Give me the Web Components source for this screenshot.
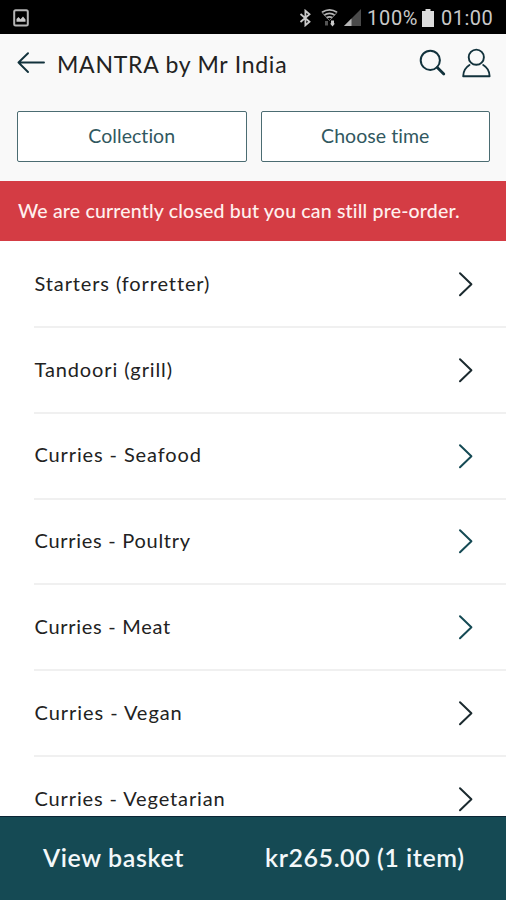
<!DOCTYPE html>
<html lang="en">
<head>
<meta charset="utf-8">
<meta name="viewport" content="width=device-width, initial-scale=1">
<title>MANTRA by Mr India</title>
<style>
  html, body { margin: 0; height: 100%; }
  body { font-family: Lato, "Open Sans", sans-serif; overflow: hidden; }
</style>
</head>
<body>
<menu-screen></menu-screen>

<template id="status-bar">
  <style>
    :host {
      display: flex;
      align-items: center;
      height: 34px;
      box-sizing: border-box;
      padding: 1px 12px 0 13px;
      background: #000;
      color: #c9c9c9;
      font: 20px/34px Roboto, sans-serif;
    }
    svg { display: block; flex: none; }
    .spacer { flex: 1; }
    .bluetooth { margin-right: 9px; }
    .wifi { margin-right: 5px; }
    .signal { margin-right: 5px; }
    .percent { width: 52px; letter-spacing: 0.7px; margin-right: 3px; white-space: nowrap; }
    .battery { margin-right: 7px; }
    .clock { width: 53px; letter-spacing: 0.5px; white-space: nowrap; }
  </style>
  <svg width="16" height="18" viewBox="0 0 16 18">
    <rect x="1.2" y="1.2" width="13.6" height="15.2" rx="1.5" fill="none" stroke="#b5b5b5" stroke-width="2"/>
    <path d="M3.5 12.7V10l2-2 2 2.2L10 7.5l2.5 3v2.2z" fill="#c9c9c9"/>
  </svg>
  <span class="spacer"></span>
  <svg class="bluetooth" width="13" height="18" viewBox="0 0 13 18">
    <path d="M1.5 5l9 7.8L6.4 16.3V1.7l4.1 3.5-9 7.8" fill="none" stroke="#c9c9c9" stroke-width="1.8"/>
  </svg>
  <svg class="wifi" width="17" height="19" viewBox="0 0 17 19">
    <g fill="none" stroke="#b5b5b5" stroke-width="1.7">
      <path d="M1 4.3q7.5-5 15 0"/>
      <path d="M3 7.2q5.5-3.8 11 0"/>
      <path d="M5.5 9.8q3-2 6 0"/>
    </g>
    <path d="M1 4.5l7.5 8 7.5-8" fill="none" stroke="#777"/>
    <path d="M4 13h3v4.5H4z" fill="#555"/>
    <path d="M10 12.500h3v3h1L11.500 18.500 9 15.500h1z" fill="#c9c9c9"/>
  </svg>
  <svg class="signal" width="19" height="19" viewBox="0 0 19 19">
    <path d="M18 1v17H1z" fill="#4a4a4a"/>
    <path d="M8.5 10.5V18H1z" fill="#b5b5b5"/>
  </svg>
  <span class="percent">100%</span>
  <svg class="battery" width="12" height="18" viewBox="0 0 12 18">
    <path d="M3.5 0h5v2H12v16H0V2h3.500z" fill="#dcdcdc"/>
  </svg>
  <span class="clock">01:00</span>
</template>

<template id="top-bar">
  <style>
    :host {
      display: flex;
      align-items: center;
      height: 60px;
      box-sizing: border-box;
      padding: 0 15px 2px 17px;
      color: #222;
    }
    svg { display: block; flex: none; fill: none; stroke: #12323c; stroke-linecap: round; stroke-linejoin: round; }
    h1 {
      flex: 1;
      margin: 1px 0 0 12px;
      font-size: 23px;
      font-weight: 400;
      line-height: 28px;
      letter-spacing: 0.75px;
      white-space: nowrap;
    }
    .search { margin-right: 16.5px; }
  </style>
  <svg width="28" height="22" viewBox="0 0 28 22" stroke-width="1.9">
    <path d="M27 10.5H1.5M11 1.2L1.5 10.5l9.5 9.5"/>
  </svg>
  <h1><slot></slot></h1>
  <svg class="search" width="27" height="28" viewBox="0 0 27 28">
    <circle cx="11.3" cy="11.3" r="9.6" stroke-width="2"/>
    <path d="M18.3 18.5l6.500 6.500" stroke-width="2.8"/>
  </svg>
  <svg width="29" height="30" viewBox="0 0 29 30" stroke-width="1.9">
    <circle cx="14.3" cy="9.2" r="7.6"/>
    <path d="M7.5 17C3.8 19.2 1.3 23.5 1.2 28.2h26.4C27.5 23.5 25 19.2 21.2 17"/>
  </svg>
</template>

<template id="option-button">
  <style>
    :host { display: block; flex: 1; }
    button {
      display: block;
      width: 100%;
      height: 51px;
      padding: 0 0 1px;
      border: 1.5px solid #4b6c72;
      border-radius: 2px;
      background: #fff;
      color: #315860;
      font: 19.5px/24px Lato, sans-serif;
      letter-spacing: 0.05px;
    }
  </style>
  <button type="button"><slot></slot></button>
</template>

<template id="notice-banner">
  <style>
    :host {
      display: block;
      height: 60px;
      box-sizing: border-box;
      padding-left: 18px;
      background: #d43c44;
      color: #fff0ee;
      font-size: 19.5px;
      font-weight: 500;
      line-height: 59px;
      letter-spacing: 0.18px;
      white-space: nowrap;
    }
  </style>
  <slot></slot>
</template>

<template id="category-row">
  <style>
    :host {
      display: flex;
      align-items: center;
      justify-content: space-between;
      height: 85.8px;
      box-sizing: border-box;
      margin-left: 34px;
      padding: 0 33px 0 0.5px;
      border-bottom: 2px solid #f0f0f0;
      color: #222;
      font-size: 20px;
      line-height: 26px;
      white-space: nowrap;
    }
    span { letter-spacing: var(--tracking, 0.88px); margin-top: -2.4px; }
    svg { display: block; fill: none; stroke: var(--chevron, #1b2a2f); stroke-width: 2; stroke-linecap: round; stroke-linejoin: round; }
  </style>
  <span><slot></slot></span>
  <svg width="15" height="26" viewBox="0 0 15 26"><path d="M2 2.300l11.400 11L2 24.300"/></svg>
</template>

<template id="basket-bar">
  <style>
    :host {
      display: flex;
      justify-content: space-between;
      flex: none;
      height: 84px;
      box-sizing: border-box;
      padding: 0 41.5px 0 43px;
      border-top: 1px solid #0b2535;
      background: #154a54;
      color: #f3f8fa;
      font-size: 25px;
      font-weight: 600;
      line-height: 81px;
      white-space: nowrap;
    }
    .action { letter-spacing: 0.6px; }
    .total { letter-spacing: 0.55px; }
  </style>
  <span class="action"><slot></slot></span>
  <span class="total"><slot name="total"></slot></span>
</template>

<template id="menu-screen">
  <style>
    :host { display: flex; flex-direction: column; height: 100vh; background: #fff; }
    header { flex: none; height: 147px; background: #f9f9f9; }
    .options { display: flex; gap: 14px; margin-top: 17px; padding: 0 16px 0 17px; }
    notice-banner { flex: none; }
    main { flex: 1; min-height: 0; padding-top: 1.2px; overflow: hidden; }
    .tight { --tracking: 0.72px; }
    .wide { --tracking: 0.95px; }
    .teal { --chevron: #154a54; }
  </style>
  <status-bar></status-bar>
  <header>
    <top-bar>MANTRA by Mr India</top-bar>
    <div class="options">
      <option-button>Collection</option-button>
      <option-button>Choose time</option-button>
    </div>
  </header>
  <notice-banner>We are currently closed but you can still pre-order.</notice-banner>
  <main>
    <category-row>Starters (forretter)</category-row>
    <category-row>Tandoori (grill)</category-row>
    <category-row class="teal">Curries - Seafood</category-row>
    <category-row class="teal tight">Curries - Poultry</category-row>
    <category-row class="teal tight">Curries - Meat</category-row>
    <category-row class="wide">Curries - Vegan</category-row>
    <category-row>Curries - Vegetarian</category-row>
  </main>
  <basket-bar>View basket<span slot="total">kr265.00 (1 item)</span></basket-bar>
</template>

<script>
class TemplateElement extends HTMLElement {
  constructor() {
    super();
    const template = document.getElementById(this.localName);
    this.attachShadow({ mode: 'open' });
    this.shadowRoot.appendChild(template.content.cloneNode(true));
  }
}

class StatusBar extends TemplateElement {}
class TopBar extends TemplateElement {}
class OptionButton extends TemplateElement {}
class NoticeBanner extends TemplateElement {}
class CategoryRow extends TemplateElement {}
class BasketBar extends TemplateElement {}
class MenuScreen extends TemplateElement {}

customElements.define('status-bar', StatusBar);
customElements.define('top-bar', TopBar);
customElements.define('option-button', OptionButton);
customElements.define('notice-banner', NoticeBanner);
customElements.define('category-row', CategoryRow);
customElements.define('basket-bar', BasketBar);
customElements.define('menu-screen', MenuScreen);
</script>
</body>
</html>
